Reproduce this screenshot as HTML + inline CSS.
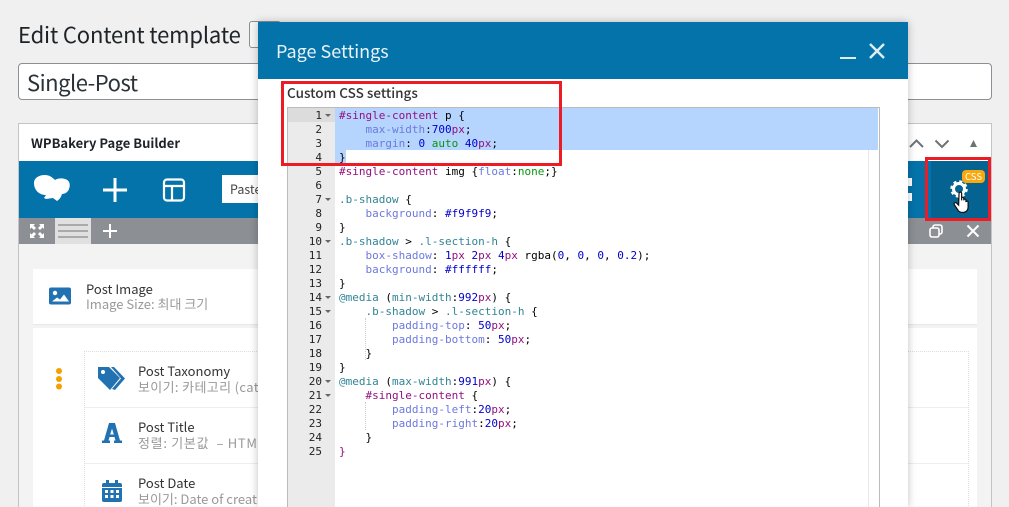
<!DOCTYPE html>
<html><head><meta charset="utf-8">
<style>
html,body{margin:0;padding:0;width:1009px;height:507px;overflow:hidden;background:#f0f0f1}
body{position:relative;font-family:"Noto Sans CJK KR","Liberation Sans",sans-serif;color:#1d2327}
.a{position:absolute}
.t{position:absolute;white-space:nowrap;line-height:1.2}
pre{margin:0;font:11px/14px "DejaVu Sans Mono",monospace;color:#000}
.k{color:#930f80}.p{color:#6d79de}.n{color:#0000cd}.v{color:#318495}.g{color:#06960e}
.gut{position:absolute;left:288px;top:108px;width:47px;height:399px;background:#ebebeb}
.ln{position:absolute;left:0;width:34px;text-align:right;font:11px/14px "DejaVu Sans Mono",monospace;color:#222;margin-top:1px}
.ar{position:absolute;left:37px;width:0;height:0;border-left:3px solid transparent;border-right:3px solid transparent;border-top:3px solid #666}
</style></head><body>

<div class="t" style="left:18px;top:21px;font-size:22px;letter-spacing:-.15px;color:#1d2327">Edit Content template</div>
<div class="a" style="left:249px;top:21px;width:30px;height:25px;border:1px solid #8c8f94;border-radius:3px;background:#f6f7f7"></div>
<div class="a" style="left:18px;top:63px;width:972px;height:35px;border:1px solid #8c8f94;border-radius:4px;background:#fff"></div>
<div class="t" style="left:27px;top:69px;font-size:22px;letter-spacing:-.5px;color:#2c3338">Single-Post</div>

<div class="a" style="left:18px;top:123px;width:972px;height:384px;border:1px solid #c3c4c7;border-bottom:0;background:#f3f3f3"></div>
<div class="a" style="left:19px;top:124px;width:972px;height:37px;background:#fff"></div>
<div class="t" style="left:31px;top:135px;font-size:13px;font-weight:700;color:#1d2327">WPBakery Page Builder</div>
<div class="a" style="left:19px;top:161px;width:972px;height:57px;background:#0473aa"></div>
<div class="a" style="left:19px;top:218px;width:972px;height:26px;background:#8c8f94"></div>

<!-- toolbar icons -->
<svg class="a" style="left:30px;top:172px" width="44" height="34" viewBox="0 0 44 34"><path d="M4 11c0-5 5-8 11-8 4 0 7 2 10 5 3-2 7-2 10-1 4 1 6 5 4 10-1 3-4 5-7 5-1 3-2 5-5 7l-4-3-7 1-2-1 2-3c-7 0-12-5-12-12z" fill="#fff"/></svg>
<svg class="a" style="left:102px;top:177px" width="26" height="26"><path d="M1 13h24M13 1v24" stroke="#fff" stroke-width="3"/></svg>
<svg class="a" style="left:162px;top:177px" width="25" height="25" fill="none" stroke="#fff" stroke-width="2.2"><rect x="2" y="2.500" width="20" height="21" rx="3"/><path d="M2 9h20M10 9v14"/></svg>
<div class="a" style="left:222px;top:175px;width:40px;height:28px;background:#fff"></div>
<div class="t" style="left:230px;top:181px;font-size:12.500px;color:#444">Paste</div>
<svg class="a" style="left:29px;top:223px" width="16" height="16" fill="#fff"><path d="M1 1h5L4.500 2.500 7 5 5 7 2.500 4.500 1 6zM15 1v5L13.500 4.500 11 7 9 5 11.500 2.500 10 1zM1 15v-5l1.500 1.500L5 9l2 2-2.500 2.500L6 15zM15 15h-5l1.500-1.500L9 11l2-2 2.500 2.500L15 10z"/></svg>
<div class="a" style="left:55px;top:218px;width:36px;height:26px;background:#e0e0e0"></div>
<svg class="a" style="left:58px;top:224px" width="30" height="14" fill="#aaa"><rect y="0" width="30" height="2"/><rect y="6" width="30" height="2"/><rect y="12" width="30" height="2"/></svg>
<svg class="a" style="left:102px;top:223px" width="16" height="16"><path d="M1 8h14M8 1v14" stroke="#fff" stroke-width="2"/></svg>

<!-- right header controls -->
<svg class="a" style="left:906px;top:136px" width="80" height="14" fill="none" stroke="#6b7278" stroke-width="2"><path d="M4 11l6.500-6.500 6.500 6.500M29.500 4.500l6.500 6.500 6.500-6.500"/><path d="M64 11l3.500-7 3.500 7z" fill="#6b7278" stroke="none"/></svg>
<div class="a" style="left:908px;top:178px;width:4px;height:8px;background:#fff"></div>
<div class="a" style="left:908px;top:193px;width:4px;height:8px;background:#fff"></div>
<div class="a" style="left:931px;top:161px;width:59px;height:57px;background:#056391"></div>
<svg class="a" style="left:950px;top:180px" width="18" height="18"><circle cx="9" cy="9" r="5.500" fill="none" stroke="#fff" stroke-width="3"/><circle cx="9" cy="9" r="7.500" fill="none" stroke="#fff" stroke-width="2.500" stroke-dasharray="3 2.900"/></svg>
<div class="a" style="left:962px;top:170px;width:23px;height:13px;border-radius:4px;background:#f8a90f"></div>
<div class="t" style="left:965px;top:171px;font-size:9.500px;color:#fff">CSS</div>
<svg class="a" style="left:953px;top:191px" width="19" height="23" viewBox="0 0 22 26"><path d="M7 2.500c0-2 3-2 3 0v8l0-2c0-2 2.500-2 2.500 0v2c0-2 2.500-2 2.500 0v2c0-1.500 2.500-1.500 2.500 0v6c0 3-2 6-6 6-3 0-5-1-6-3l-4-6c-1-2 1-3 2.500-2l2.500 2.500z" fill="#fff" stroke="#111" stroke-width="1.400"/></svg>
<svg class="a" style="left:928px;top:223px" width="16" height="16" fill="none" stroke="#fff" stroke-width="1.600"><rect x="5" y="2" width="9" height="9" rx="2"/><rect x="2" y="5" width="9" height="9" rx="2" fill="#8c8f94"/></svg>
<svg class="a" style="left:966px;top:224px" width="14" height="14"><path d="M1.500 1.500l11 11M12.500 1.500l-11 11" stroke="#fff" stroke-width="2"/></svg>

<!-- page content -->
<div class="a" style="left:33px;top:269px;width:944px;height:55px;background:#fff;border-bottom:1px solid #e8e8e8"></div>
<div class="a" style="left:33px;top:328px;width:944px;height:179px;background:#fff"></div>
<svg class="a" style="left:49px;top:287px" width="23" height="18"><rect width="22" height="17" y=".5" rx="2" fill="#2271b1"/><circle cx="6" cy="6" r="2.200" fill="#fff"/><path d="M3 14.500l5-4 3 2 4-5 5 7z" fill="#fff"/></svg>
<div class="t" style="left:86px;top:281px;font-size:13px;color:#333">Post Image</div>
<div class="t" style="left:86px;top:296px;font-size:13px;color:#999">Image Size: 최대 크기</div>

<svg class="a" style="left:54px;top:367px" width="10" height="24" fill="#f59f00"><circle cx="5" cy="4" r="3"/><circle cx="5" cy="12" r="3"/><circle cx="5" cy="19.500" r="3"/></svg>
<div class="a" style="left:84px;top:351px;width:883px;height:156px;border:1px dotted #ddd;border-bottom:0"></div>
<div class="a" style="left:85px;top:407px;width:883px;height:1px;background:#eee"></div>
<div class="a" style="left:85px;top:463px;width:883px;height:1px;background:#eee"></div>

<svg class="a" style="left:97px;top:366px" width="30" height="26" fill="#2271b1"><path d="M1 1h11l11 11-10 12L1 12z"/><circle cx="6" cy="6" r="2" fill="#fff"/><path d="M17 1l11 11.500L18 24l-3-1 9-10.500L14 1z"/></svg>
<div class="t" style="left:138px;top:363px;font-size:13px;color:#333">Post Taxonomy</div>
<div class="t" style="left:138px;top:379px;font-size:13px;letter-spacing:.35px;color:#999">보이기: 카테고리 (cat</div>

<svg class="a" style="left:102px;top:422px" width="20" height="22" fill="#2271b1"><path fill-rule="evenodd" d="M7 1h6l5 17.500h2V21h-8v-2.500h1.500L12.500 15h-5l-1 3.500H8V21H0v-2.500h2zM10 6.500L8.200 12.500h3.600z"/></svg>
<div class="t" style="left:138px;top:419px;font-size:13px;color:#333">Post Title</div>
<div class="t" style="left:138px;top:435px;font-size:13px;letter-spacing:.7px;color:#999">정렬: 기본값 &nbsp;– HTM</div>

<svg class="a" style="left:102px;top:479px" width="20" height="23" fill="#2271b1"><path d="M0 6a2 2 0 0 1 2-2h2V1h3v3h6V1h3v3h2a2 2 0 0 1 2 2v2H0z"/><path d="M0 9h20v12a2 2 0 0 1-2 2H2a2 2 0 0 1-2-2z"/><g fill="#fff"><rect x="3" y="11" width="3" height="3"/><rect x="8.500" y="11" width="3" height="3"/><rect x="14" y="11" width="3" height="3"/><rect x="3" y="16" width="3" height="3"/><rect x="8.500" y="16" width="3" height="3"/><rect x="14" y="16" width="3" height="3"/></g></svg>
<div class="t" style="left:138px;top:475px;font-size:13px;color:#333">Post Date</div>
<div class="t" style="left:138px;top:491px;font-size:13px;color:#999">보이기: Date of creat</div>

<!-- modal -->
<div class="a" style="left:258px;top:22px;width:650px;height:485px;background:#fff;box-shadow:0 0 8px rgba(0,0,0,.25)"></div>
<div class="a" style="left:258px;top:22px;width:650px;height:57px;background:#0473aa"></div>
<div class="t" style="left:276px;top:41px;font-size:18px;color:#e8f2f7">Page Settings</div>
<div class="a" style="left:840px;top:57px;width:16px;height:2px;background:#dfeef5"></div>
<svg class="a" style="left:868px;top:42px" width="18" height="18"><path d="M2 2l14 14M16 2L2 16" stroke="#dfeef5" stroke-width="2.400"/></svg>
<div class="t" style="left:287px;top:84px;font-size:13.500px;font-weight:500;color:#333">Custom CSS settings</div>

<!-- editor -->
<div class="a" style="left:287px;top:107px;width:591px;height:400px;border:1px solid #bbb;border-bottom:0;background:#fff"></div>
<div class="gut">
<div class="a" style="left:0;top:0;width:47px;height:14px;background:#dcdcdc"></div>
<div class="ln" style="top:0">1</div><div class="ar" style="top:6px"></div>
<div class="ln" style="top:14px">2</div><div class="ln" style="top:28px">3</div><div class="ln" style="top:42px">4</div><div class="ln" style="top:56px">5</div><div class="ln" style="top:70px">6</div>
<div class="ln" style="top:84px">7</div><div class="ar" style="top:90px"></div>
<div class="ln" style="top:98px">8</div><div class="ln" style="top:112px">9</div>
<div class="ln" style="top:126px">10</div><div class="ar" style="top:132px"></div>
<div class="ln" style="top:140px">11</div><div class="ln" style="top:154px">12</div><div class="ln" style="top:168px">13</div>
<div class="ln" style="top:182px">14</div><div class="ar" style="top:188px"></div>
<div class="ln" style="top:196px">15</div><div class="ar" style="top:202px"></div>
<div class="ln" style="top:210px">16</div><div class="ln" style="top:224px">17</div><div class="ln" style="top:238px">18</div><div class="ln" style="top:252px">19</div>
<div class="ln" style="top:266px">20</div><div class="ar" style="top:272px"></div>
<div class="ln" style="top:280px">21</div><div class="ar" style="top:286px"></div>
<div class="ln" style="top:294px">22</div><div class="ln" style="top:308px">23</div><div class="ln" style="top:322px">24</div><div class="ln" style="top:336px">25</div>
</div>
<div class="a" style="left:335px;top:108px;width:543px;height:42px;background:#b5d5ff"></div>
<div class="a" style="left:335px;top:150px;width:11px;height:14px;background:#b5d5ff"></div>
<div class="a" style="left:868px;top:150px;width:1px;height:357px;background:#e8e8e8"></div>
<div class="a" style="left:365px;top:318px;height:42px;border-left:1px dotted #ccc"></div>
<div class="a" style="left:365px;top:402px;height:28px;border-left:1px dotted #ccc"></div>
<pre class="a" style="left:339px;top:109px"><span class="k">#single-content</span> p {
    <span class="p">max-width</span>:<span class="n">700</span><span class="k">px</span>;
    <span class="p">margin</span>: <span class="n">0</span> <span class="g">auto</span> <span class="n">40</span><span class="k">px</span>;
}
<span class="k">#single-content</span> img {<span class="p">float</span>:<span class="g">none</span>;}

<span class="v">.b-shadow</span> {
    <span class="p">background</span>: <span class="n">#f9f9f9</span>;
}
<span class="v">.b-shadow</span> &gt; <span class="v">.l-section-h</span> {
    <span class="p">box-shadow</span>: <span class="n">1</span><span class="k">px</span> <span class="n">2</span><span class="k">px</span> <span class="n">4</span><span class="k">px</span> rgba(<span class="n">0</span>, <span class="n">0</span>, <span class="n">0</span>, <span class="n">0.2</span>);
    <span class="p">background</span>: <span class="n">#ffffff</span>;
}
<span class="v">@media</span> (<span class="v">min-width</span>:<span class="n">992</span><span class="k">px</span>) {
    <span class="v">.b-shadow</span> &gt; <span class="v">.l-section-h</span> {
        <span class="p">padding-top</span>: <span class="n">50</span><span class="k">px</span>;
        <span class="p">padding-bottom</span>: <span class="n">50</span><span class="k">px</span>;
    }
}
<span class="v">@media</span> (<span class="v">max-width</span>:<span class="n">991</span><span class="k">px</span>) {
    <span class="k">#single-content</span> {
        <span class="p">padding-left</span>:<span class="n">20</span><span class="k">px</span>;
        <span class="p">padding-right</span>:<span class="n">20</span><span class="k">px</span>;
    }
<span class="k">}</span></pre>

<!-- red highlight boxes -->
<div class="a" style="left:281px;top:81px;width:275px;height:79px;border:3px solid #ed1c24"></div>
<div class="a" style="left:925px;top:157px;width:60px;height:58px;border:3px solid #ed1c24"></div>
</body></html>
